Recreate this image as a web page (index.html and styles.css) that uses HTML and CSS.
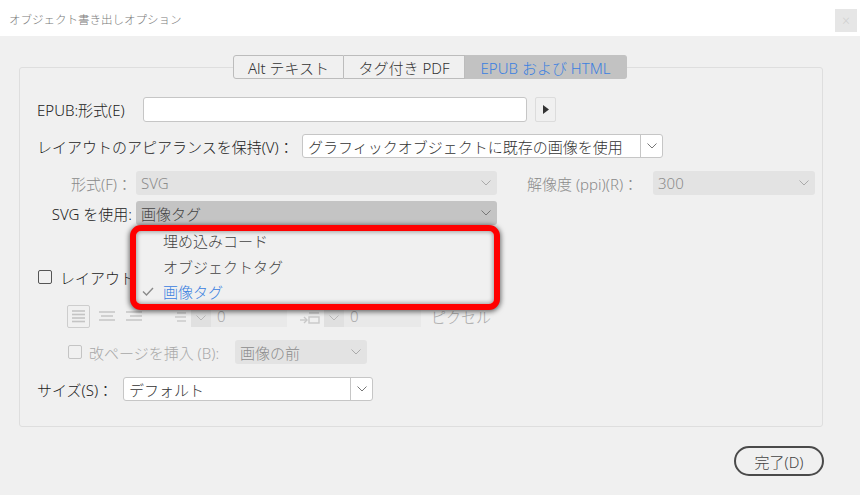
FILE: index.html
```html
<!DOCTYPE html>
<html lang="ja">
<head>
<meta charset="utf-8">
<link rel="stylesheet" href="styles.css">
</head>
<body>
<div class="titlebar">
  <span class="title">オブジェクト書き出しオプション</span>
  <span class="close">×</span>
</div>
<div class="main">
  <div class="tabs">
    <div class="tab t1">Alt テキスト</div>
    <div class="tab t2">タグ付き PDF</div>
    <div class="tab t3 active">EPUB および HTML</div>
  </div>
  <div class="panel">
    <div class="row">
      <span class="lbl l1">EPUB:形式(E)</span>
      <span class="input w1"></span>
      <span class="arrowbtn"><svg width="6" height="9" viewBox="0 0 6 9"><polygon points="0,0 6,4.5 0,9" fill="#333"/></svg></span>
    </div>
    <div class="row">
      <span class="lbl l2">レイアウトのアピアランスを保持(V)：</span>
      <span class="select white w2"><span class="val">グラフィックオブジェクトに既存の画像を使用</span><span class="chev sep"><svg width="10" height="6" viewBox="0 0 10 6"><polyline points="0.5,0.5 5,5 9.5,0.5" fill="none" stroke="#777" stroke-width="1"/></svg></span></span>
    </div>
    <div class="row">
      <span class="lbl l3 dis">形式(F)：</span>
      <span class="select grey w3"><span class="val">SVG</span><span class="chev"><svg width="10" height="6" viewBox="0 0 10 6"><polyline points="0.5,0.5 5,5 9.5,0.5" fill="none" stroke="#aaa" stroke-width="1"/></svg></span></span>
      <span class="lbl l4 dis">解像度 (ppi)(R)：</span>
      <span class="select grey w4"><span class="val">300</span><span class="chev"><svg width="10" height="6" viewBox="0 0 10 6"><polyline points="0.5,0.5 5,5 9.5,0.5" fill="none" stroke="#aaa" stroke-width="1"/></svg></span></span>
    </div>
    <div class="row r4">
      <span class="lbl l3">SVG を使用:</span>
      <span class="select open w3"><span class="val">画像タグ</span><span class="chev"><svg width="10" height="6" viewBox="0 0 10 6"><polyline points="0.5,0.5 5,5 9.5,0.5" fill="none" stroke="#777" stroke-width="1"/></svg></span></span>
    </div>
    <div class="row r5">
      <span class="cb"></span>
      <span class="cbtext">レイアウト</span>
    </div>
    <div class="row r6">
      <span class="icon boxed"><svg width="23" height="23" viewBox="0 0 23 23"><g stroke="#c4c4c4" stroke-width="1.6"><line x1="5" y1="6" x2="18" y2="6"/><line x1="5" y1="9.5" x2="18" y2="9.5"/><line x1="5" y1="13" x2="18" y2="13"/><line x1="5" y1="16.5" x2="18" y2="16.5"/></g></svg></span>
      <span class="icon i2"><svg width="20" height="23" viewBox="0 0 20 23"><g stroke="#c8c8c8" stroke-width="1.6"><line x1="2" y1="7" x2="18" y2="7"/><line x1="4" y1="11" x2="16" y2="11"/><line x1="2" y1="15" x2="18" y2="15"/></g></svg></span>
      <span class="icon i3"><svg width="20" height="23" viewBox="0 0 20 23"><g stroke="#c8c8c8" stroke-width="1.6"><line x1="2" y1="7" x2="18" y2="7"/><line x1="6" y1="11" x2="18" y2="11"/><line x1="2" y1="15" x2="18" y2="15"/></g></svg></span>
      <span class="icon i4"><svg width="14" height="23" viewBox="0 0 14 23"><g stroke="#c8c8c8" stroke-width="1.4"><line x1="3" y1="8" x2="12" y2="8"/><line x1="1" y1="12" x2="12" y2="12"/><line x1="3" y1="16" x2="12" y2="16"/></g></svg></span>
      <span class="spin s1"><span class="spinbtn"><svg width="10" height="6" viewBox="0 0 10 6"><polyline points="0.5,0.5 5,5 9.5,0.5" fill="none" stroke="#b8b8b8" stroke-width="1"/></svg></span><span class="spinval">0</span></span>
      <span class="icon i5"><svg width="22" height="23" viewBox="0 0 22 23"><g stroke="#c8c8c8" stroke-width="1.4" fill="none"><line x1="1" y1="15" x2="8" y2="15"/><polyline points="5,12 8,15 5,18"/><rect x="10" y="12" width="10" height="6"/><line x1="10" y1="8" x2="20" y2="8"/><line x1="12" y1="4" x2="18" y2="4"/></g></svg></span>
      <span class="spin s2"><span class="spinbtn"><svg width="10" height="6" viewBox="0 0 10 6"><polyline points="0.5,0.5 5,5 9.5,0.5" fill="none" stroke="#b8b8b8" stroke-width="1"/></svg></span><span class="spinval">0</span></span>
      <span class="pix">ピクセル</span>
    </div>
    <div class="row r7">
      <span class="cb dis"></span>
      <span class="cbtext dis">改ページを挿入 (B):</span>
      <span class="select grey w7"><span class="val">画像の前</span><span class="chev"><svg width="10" height="6" viewBox="0 0 10 6"><polyline points="0.5,0.5 5,5 9.5,0.5" fill="none" stroke="#aaa" stroke-width="1"/></svg></span></span>
    </div>
    <div class="row">
      <span class="lbl l8">サイズ(S)：</span>
      <span class="select white w8"><span class="val">デフォルト</span><span class="chev sep"><svg width="10" height="6" viewBox="0 0 10 6"><polyline points="0.5,0.5 5,5 9.5,0.5" fill="none" stroke="#777" stroke-width="1"/></svg></span></span>
    </div>

    <div class="popup">
      <div class="items">
        <div class="item"><span class="chk"></span>埋め込みコード</div>
        <div class="item"><span class="chk"></span>オブジェクトタグ</div>
        <div class="item sel"><span class="chk"><svg width="12" height="9" viewBox="0 0 12 9"><polyline points="1,4.5 4.5,8 11,1" fill="none" stroke="#8a8a8a" stroke-width="1.4"/></svg></span>画像タグ</div>
      </div>
    </div>
  </div>
  <div class="footer">
    <button class="done">完了(D)</button>
  </div>
</div>
</body>
</html>
```
FILE: styles.css
```css
* { box-sizing: border-box; }
html, body { margin: 0; padding: 0; }
body {
  width: 860px;
  height: 495px;
  overflow: hidden;
  background: #f0f0f0;
  font-family: "Noto Sans", "Noto Sans CJK JP", sans-serif;
  font-size: 15px;
  font-weight: 300;
  color: #222;
}
.titlebar {
  height: 36px;
  background: #fff;
  display: flex;
  align-items: center;
  justify-content: space-between;
  padding: 0 3px 0 9px;
}
.title { font-size: 11.5px; color: #7a7a7a; margin-top: 1px; }
.close {
  width: 22px; height: 23px;
  background: #e6e6e6;
  color: #d0d0d0;
  font-size: 14px;
  display: flex; align-items: center; justify-content: center;
  margin-top: 5px;
}
.main { padding: 19px 36px 0 19px; }
.tabs {
  display: flex;
  margin-left: 214px;
  position: relative;
  z-index: 1;
  height: 24px;
}
.tab {
  height: 24px;
  border: 1px solid #bcbcbc;
  border-left-width: 0;
  background: #f0f0f0;
  display: flex; align-items: center; justify-content: center;
  color: #333;
}
.t1 { width: 111px; border-left-width: 1px; border-radius: 3px 0 0 3px; }
.t2 { width: 121px; }
.t3 { width: 162px; border-radius: 0 3px 3px 0; }
.tab.active { background: #c2c2c2; color: #3a80e0; border-color: #c2c2c2; }
.panel {
  position: relative;
  margin-top: -12px;
  width: 804px;
  height: 360px;
  border: 1px solid #dedede;
  border-radius: 3px;
  padding: 29px 0 0 17px;
  display: flex;
  flex-direction: column;
  gap: 13px;
}
.row {
  display: flex;
  align-items: center;
  height: 24px;
  flex: none;
}
.row.r4 { margin-top: -7px; }
.row.r5 { margin-top: 27px; }
.row.r7 { margin-top: -1px; }
.lbl { white-space: nowrap; }
.dis { color: #8a8a8a; }
.l1 { width: 106px; }
.l2 { width: 265px; }
.l3 { width: 95px; text-align: right; margin-right: 4px; }
.l4 { margin-left: 30px; width: 126px; }
.l8 { width: 86px; }
.input {
  height: 25px;
  background: #fff;
  border: 1px solid #c6c6c6;
  border-radius: 3px;
}
.w1 { width: 384px; }
.arrowbtn {
  margin-left: 8px;
  width: 21px; height: 25px;
  border: 1px solid #dcdcdc;
  border-radius: 2px;
  display: flex; align-items: center; justify-content: center;
}
.select {
  height: 24px;
  display: flex;
  align-items: center;
  border-radius: 3px;
}
.select .val {
  flex: 1;
  padding-left: 5px;
  white-space: nowrap;
}
.select .chev {
  width: 22px; height: 100%;
  display: flex; align-items: center; justify-content: center;
}
.select .chev.sep { border-left: 1px solid #c6c6c6; }
.select.white { background: #fff; border: 1px solid #c6c6c6; color: #333; }
.select.grey { background: #e3e3e3; color: #8c8c8c; }
.select.open { background: #c4c4c4; color: #444; }
.w2 { width: 361px; }
.w3 { width: 361px; }
.w4 { width: 162px; }
.w7 { width: 132px; }
.w8 { width: 250px; }
.cb {
  width: 14px; height: 14px;
  border: 1px solid #555;
  border-radius: 2px;
  margin-left: 1px;
}
.cb.dis { border-color: #c4c4c4; margin-left: 31px; }
.cbtext { margin-left: 8px; }
.cbtext.dis { color: #a8a8a8; width: 146px; margin-left: 7px; white-space: nowrap; }
.r6 { margin-top: 2px; }
.icon { display: flex; align-items: center; }
.boxed {
  margin-left: 30px;
  width: 23px; height: 23px;
  border: 1px solid #cdcdcd;
  border-radius: 2px;
}
.boxed svg { margin: -1px; }
.i2 { margin-left: 7px; }
.i3 { margin-left: 7px; }
.i4 { margin-left: 30px; }
.spin {
  height: 22px;
  display: flex;
  background: #e9e9e9;
  width: 96px;
  margin-left: 3px;
}
.spinbtn {
  width: 20px;
  background: #e0e0e0;
  display: flex; align-items: center; justify-content: center;
  padding-top: 4px;
}
.spinval { padding-left: 6px; color: #a8a8a8; line-height: 22px; }
.i5 { margin-left: 12px; }
.s2 { margin-left: 3px; width: 97px; }
.pix { margin-left: 10px; color: #a8a8a8; }
.popup {
  position: absolute;
  left: 110px;
  top: 157px;
  width: 370px;
  height: 85px;
  border: 6px solid #f00;
  border-radius: 11px;
  background: #f0f0f0;
  box-shadow: 0 1px 5px 1px rgba(0,0,0,0.55), inset 0 0 4px 1px rgba(0,0,0,0.35);
}
.items { margin-top: -3px; }
.item {
  height: 25.5px;
  display: flex;
  align-items: center;
  color: #444;
}
.item.sel { color: #3a80e0; }
.chk {
  width: 27px;
  padding-left: 6px;
  display: flex; align-items: center;
}
.footer {
  display: flex;
  justify-content: flex-end;
  padding-top: 19px;
}
.done {
  width: 90px; height: 30px;
  border: 2px solid #4a4a4a;
  border-radius: 15px;
  background: #f0f0f0;
  font-family: "Noto Sans", "Noto Sans CJK JP", sans-serif;
  font-size: 15px;
  font-weight: 300;
  color: #444;
  padding: 0;
}
```
